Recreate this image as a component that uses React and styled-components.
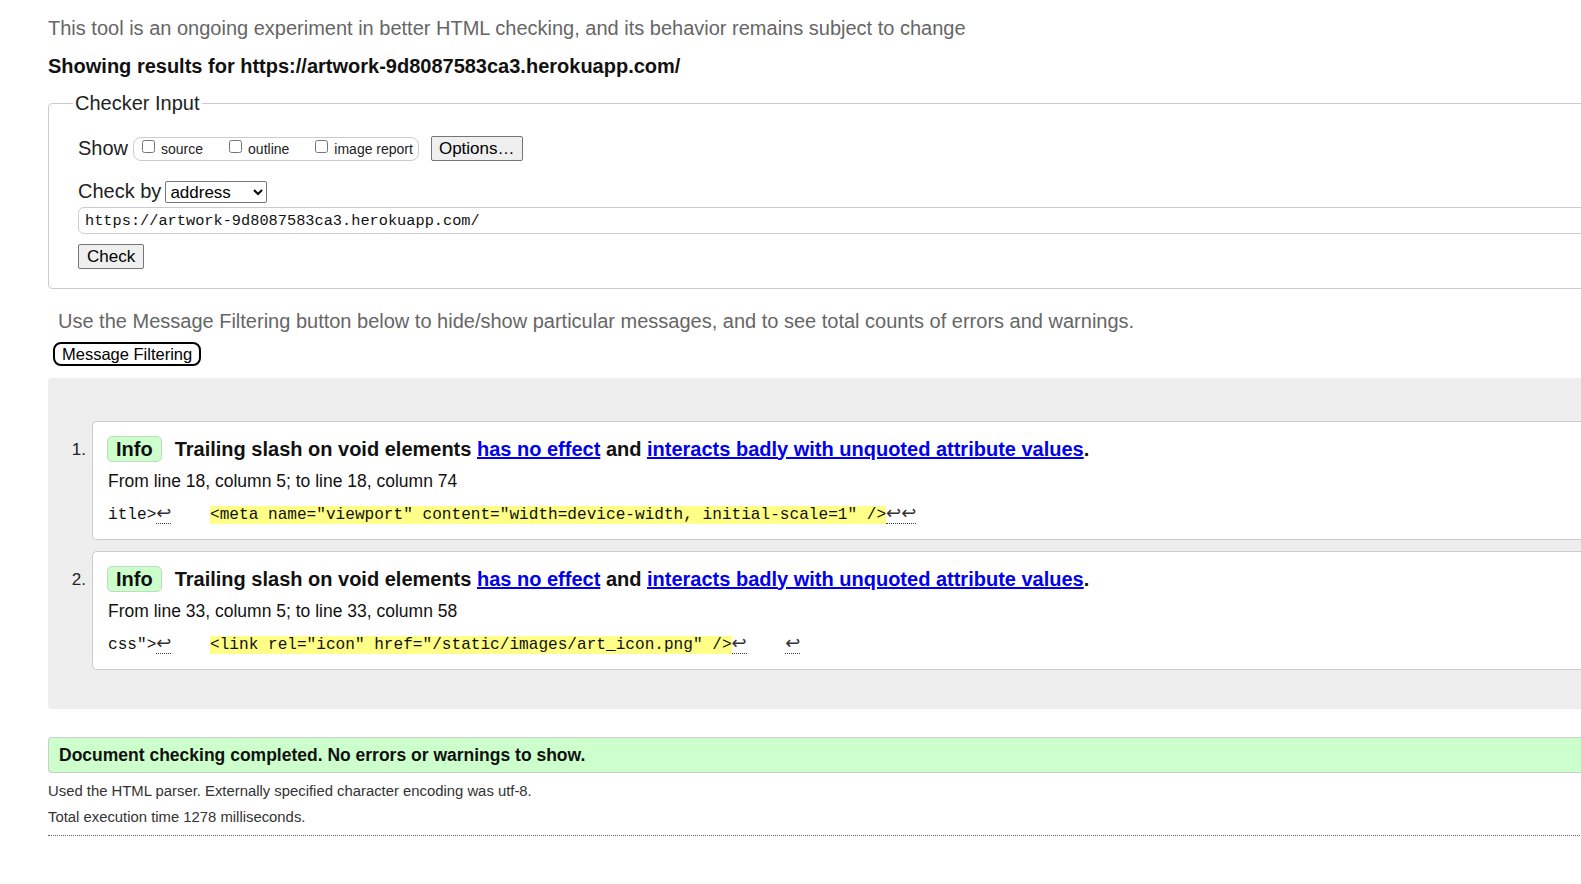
import React from 'react';
import styled, { createGlobalStyle } from 'styled-components';

const GlobalStyle = createGlobalStyle`
  html, body {
    margin: 0;
    padding: 0;
    overflow: hidden;
    background: #fff;
  }
  body {
    font-family: "Liberation Sans", Arial, sans-serif;
    color: #111;
  }
`;

const Page = styled.div`
  width: 1800px;
  padding: 17px 0 40px 48px;
`;

const Intro = styled.p`
  margin: 0;
  font-size: 20px;
  line-height: 23px;
  color: #666;
`;

const Heading = styled.h2`
  margin: 15px 0 0;
  font-size: 20px;
  line-height: 23px;
  font-weight: bold;
  color: #111;
`;

const Fieldset = styled.fieldset`
  margin: 14px 0 0;
  padding: 6px 0 19px 29px;
  border: 1px solid #ccc;
  border-radius: 4px;
  min-width: 0;
`;

const Legend = styled.legend`
  margin-left: -5px;
  padding: 0 2px;
  font-size: 20px;
  line-height: 23px;
  color: #222;
`;

const Row = styled.div`
  display: flex;
  align-items: center;
  margin-top: ${p => p.$top || 0}px;
`;

const Label = styled.span`
  font-size: 20px;
  color: #222;
  margin-right: ${p => p.$gap || 0}px;
`;

const ShowGroup = styled.span`
  display: inline-flex;
  align-items: center;
  height: 22px;
  padding: 0 5px 0 8px;
  border: 1px solid #ccc;
  border-radius: 8px;
`;

const Opt = styled.label`
  display: inline-flex;
  align-items: center;
  font-size: 14px;
  color: #222;
  margin-right: ${p => p.$gap || 0}px;

  input {
    margin: -4px 6px 0 0;
    width: 13px;
    height: 13px;
  }
`;

const NativeButton = styled.button`
  font-family: "Liberation Sans", Arial, sans-serif;
  font-size: ${p => p.$size || 17}px;
  color: #000;
  background: #efefef;
  border: 1px solid #767676;
  border-radius: 2px;
  height: ${p => p.$h || 25}px;
  padding: 0 ${p => p.$pad || 8}px;
  margin-left: ${p => p.$left || 0}px;
`;

const Select = styled.select`
  font-family: "Liberation Sans", Arial, sans-serif;
  font-size: 17px;
  width: 102px;
  height: 22px;
  margin-left: 4px;
  border: 1px solid #767676;
  border-radius: 2px;
  background: #fff;
  color: #000;
`;

const UrlInput = styled.input`
  display: block;
  box-sizing: border-box;
  width: 1700px;
  height: 27px;
  margin-top: 4px;
  padding: 0 6px;
  font-family: "Liberation Mono", monospace;
  font-size: 15.3px;
  color: #111;
  border: 1px solid #ccc;
  border-radius: 6px;
`;

const Hint = styled.p`
  margin: 21px 0 0 10px;
  font-size: 20px;
  line-height: 23px;
  color: #666;
`;

const FilterButton = styled.button`
  display: block;
  margin: 9px 0 0 5px;
  height: 24px;
  padding: 0 7px;
  font-family: "Liberation Sans", Arial, sans-serif;
  font-size: 16.5px;
  color: #000;
  background: #fff;
  border: 2px solid #000;
  border-radius: 8px;
`;

const Results = styled.ol`
  list-style: none;
  margin: 12px 0 0;
  padding: 43px 0 39px 0;
  background: #eee;
  border-radius: 4px 0 0 4px;
  display: flex;
  flex-direction: column;
  gap: 11px;
`;

const Item = styled.li`
  display: grid;
  grid-template-columns: 44px 1fr;
`;

const Num = styled.span`
  font-size: 17px;
  color: #222;
  text-align: right;
  padding: 19px 6px 0 0;
`;

const Box = styled.div`
  background: #fff;
  border: 1px solid #ccc;
  border-right: none;
  border-radius: 5px 0 0 5px;
  padding: 14px 0 13px 14px;
`;

const Title = styled.p`
  display: flex;
  align-items: center;
  margin: 0;
  font-size: 20px;
  font-weight: bold;
  color: #111;
  white-space: pre;
`;

const Badge = styled.strong`
  display: inline-block;
  background: #cfc;
  border: 1px solid #bdb;
  border-radius: 5px;
  padding: 0 8px;
  height: 24px;
  line-height: 24px;
  margin-right: 13px;
`;

const A = styled.a`
  color: #00e;
  text-decoration: underline;
`;

const Location = styled.p`
  margin: 8px 0 0 1px;
  font-size: 17.5px;
  line-height: 22px;
  color: #111;
`;

const Extract = styled.code`
  display: block;
  margin: 10px 0 0 1px;
  font-family: "Liberation Mono", monospace;
  font-size: 16.1px;
  line-height: 22px;
  color: #111;
  white-space: pre;
`;

const Nl = styled.span`
  font-family: "DejaVu Sans", sans-serif;
  font-size: 18px;
  color: #333;
  border-bottom: 1px dotted #444;
`;

const Mark = styled.mark`
  background: #ff8;
  color: #111;
`;

const Success = styled.p`
  margin: 28px 0 0;
  padding: 0 10px;
  height: 34px;
  line-height: 34px;
  background: #cfc;
  border: 1px solid #ccc;
  border-right: none;
  border-radius: 4px 0 0 4px;
  font-size: 17.5px;
  font-weight: bold;
  color: #111;
`;

const Details = styled.p`
  margin: ${p => p.$top || 0}px 0 0;
  font-size: 14.85px;
  line-height: 20px;
  color: #333;
`;

const Rule = styled.hr`
  margin: 8px 0 0;
  border: none;
  border-top: 1px dotted #666;
`;

const messages = [
  {
    from: 'From line 18, column 5; to line 18, column 74',
    before: 'itle>',
    code: '<meta name="viewport" content="width=device-width, initial-scale=1" />',
    after: [<Nl key="a">↩↩</Nl>],
  },
  {
    from: 'From line 33, column 5; to line 33, column 58',
    before: 'css">',
    code: '<link rel="icon" href="/static/images/art_icon.png" />',
    after: [<Nl key="a">↩</Nl>, '    ', <Nl key="b">↩</Nl>],
  },
];

const Message = ({ n, m }) => (
  <Item>
    <Num>{n}.</Num>
    <Box>
      <Title>
        <Badge>Info</Badge>
        Trailing slash on void elements <A href="#">has no effect</A> and{' '}
        <A href="#">interacts badly with unquoted attribute values</A>.
      </Title>
      <Location>{m.from}</Location>
      <Extract>
        {m.before}
        <Nl>↩</Nl>
        {'    '}
        <Mark>{m.code}</Mark>
        {m.after}
      </Extract>
    </Box>
  </Item>
);

const App = () => (
  <Page>
    <GlobalStyle />
    <Intro>
      This tool is an ongoing experiment in better HTML checking, and its behavior remains subject to change
    </Intro>
    <Heading>Showing results for https://artwork-9d8087583ca3.herokuapp.com/</Heading>

    <Fieldset>
      <Legend>Checker Input</Legend>
      <Row $top={15}>
        <Label $gap={5}>Show</Label>
        <ShowGroup>
          <Opt $gap={26}><input type="checkbox" />source</Opt>
          <Opt $gap={26}><input type="checkbox" />outline</Opt>
          <Opt><input type="checkbox" />image report</Opt>
        </ShowGroup>
        <NativeButton $left={12} $pad={7}>Options…</NativeButton>
      </Row>
      <Row $top={19}>
        <Label>Check by</Label>
        <Select defaultValue="address">
          <option value="address">address</option>
          <option value="upload">file upload</option>
          <option value="input">text input</option>
        </Select>
      </Row>
      <UrlInput defaultValue="https://artwork-9d8087583ca3.herokuapp.com/" />
      <Row $top={10}>
        <NativeButton $pad={8}>Check</NativeButton>
      </Row>
    </Fieldset>

    <Hint>
      Use the Message Filtering button below to hide/show particular messages, and to see total counts of errors and warnings.
    </Hint>
    <FilterButton>Message Filtering</FilterButton>

    <Results>
      {messages.map((m, i) => (
        <Message key={i} n={i + 1} m={m} />
      ))}
    </Results>

    <Success>Document checking completed. No errors or warnings to show.</Success>
    <Details $top={8}>Used the HTML parser. Externally specified character encoding was utf-8.</Details>
    <Details $top={6}>Total execution time 1278 milliseconds.</Details>
    <Rule />
  </Page>
);

export default App;
